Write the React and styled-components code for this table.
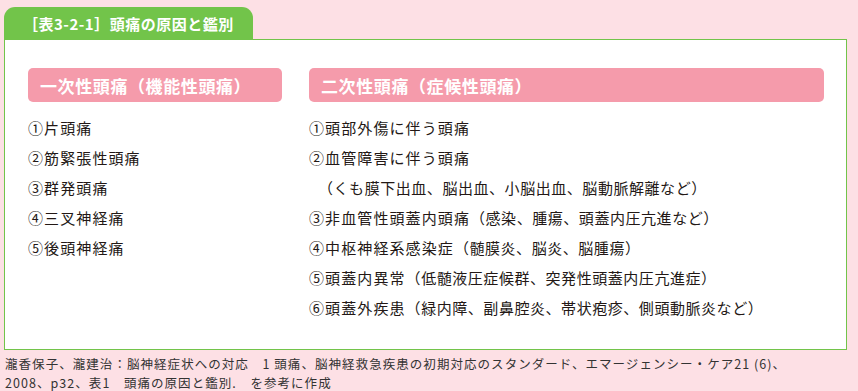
import styled, { createGlobalStyle } from 'styled-components';

const GlobalStyle = createGlobalStyle`
  html, body {
    margin: 0;
    padding: 0;
    background: #fde0e5;
  }
  body {
    font-family: "Noto Sans CJK JP", "Noto Sans", sans-serif;
    color: #231815;
  }
`;

const primary = [
  '①片頭痛',
  '②筋緊張性頭痛',
  '③群発頭痛',
  '④三叉神経痛',
  '⑤後頭神経痛',
];

const secondary = [
  { main: '①頭部外傷に伴う頭痛' },
  { main: '②血管障害に伴う頭痛' },
  { sub: '（くも膜下出血、脳出血、小脳出血、脳動脈解離など）' },
  { main: '③非血管性頭蓋内頭痛', note: '（感染、腫瘍、頭蓋内圧亢進など）' },
  { main: '④中枢神経系感染症', note: '（髄膜炎、脳炎、脳腫瘍）' },
  { main: '⑤頭蓋内異常', note: '（低髄液圧症候群、突発性頭蓋内圧亢進症）' },
  { main: '⑥頭蓋外疾患', note: '（緑内障、副鼻腔炎、帯状疱疹、側頭動脈炎など）' },
];

const App = () => {
  return (
    <>
      <GlobalStyle />
      <Wrapper>
        <Tab>［表3-2-1］頭痛の原因と鑑別</Tab>
        <Panel>
          <Column>
            <Heading>一次性頭痛（機能性頭痛）</Heading>
            <List>
              {primary.map((item) => (
                <Item key={item}>{item}</Item>
              ))}
            </List>
          </Column>
          <Column>
            <Heading>二次性頭痛（症候性頭痛）</Heading>
            <List>
              {secondary.map((row, i) =>
                row.sub ? (
                  <Item key={i} $sub>
                    {row.sub}
                  </Item>
                ) : (
                  <Item key={i}>
                    {row.main}
                    {row.note && <Note>{row.note}</Note>}
                  </Item>
                )
              )}
            </List>
          </Column>
        </Panel>
        <Source>
          瀧香保子、瀧建治：脳神経症状への対応　1 頭痛、脳神経救急疾患の初期対応のスタンダード、エマージェンシー・ケア21 (6)、
          <br />
          2008、p32、表1　頭痛の原因と鑑別.　を参考に作成
        </Source>
      </Wrapper>
    </>
  );
};

const Wrapper = styled.main`
  width: 858px;
  height: 391px;
  padding: 7px 11px 0 4px;
  box-sizing: border-box;
`;

const Tab = styled.div`
  width: 249px;
  height: 32px;
  box-sizing: border-box;
  padding-left: 19px;
  display: flex;
  align-items: center;
  background: #72c44a;
  border-radius: 11px 11px 0 0;
  color: #fff;
  font-size: 15px;
  font-weight: 700;
  letter-spacing: 0.5px;
`;

const Panel = styled.section`
  height: 311px;
  box-sizing: border-box;
  background: #fff;
  border: 1px solid #72c44a;
  padding: 28px 22px 0 23px;
  display: grid;
  grid-template-columns: 254px 1fr;
  column-gap: 27px;
  align-content: start;
`;

const Column = styled.div`
  display: flex;
  flex-direction: column;
`;

const Heading = styled.h2`
  margin: 0;
  height: 34px;
  box-sizing: border-box;
  padding-left: 12px;
  display: flex;
  align-items: center;
  background: #f59bab;
  border-radius: 5px;
  color: #fff;
  font-size: 17px;
  font-weight: 700;
  letter-spacing: 0.6px;
`;

const List = styled.ul`
  list-style: none;
  margin: 11px 0 0;
  padding: 0;
`;

const Item = styled.li`
  height: 30px;
  line-height: 30px;
  font-size: 15px;
  letter-spacing: ${(p) => (p.$sub ? '0.55px' : '1.1px')};
  padding-left: ${(p) => (p.$sub ? '9px' : '0')};
  white-space: nowrap;
`;

const Note = styled.span`
  letter-spacing: 0.55px;
`;

const Source = styled.p`
  margin: 4px 0 0 1px;
  font-size: 12.5px;
  line-height: 19px;
  color: #333;
  letter-spacing: 1.05px;
  white-space: nowrap;
`;

export default App;
